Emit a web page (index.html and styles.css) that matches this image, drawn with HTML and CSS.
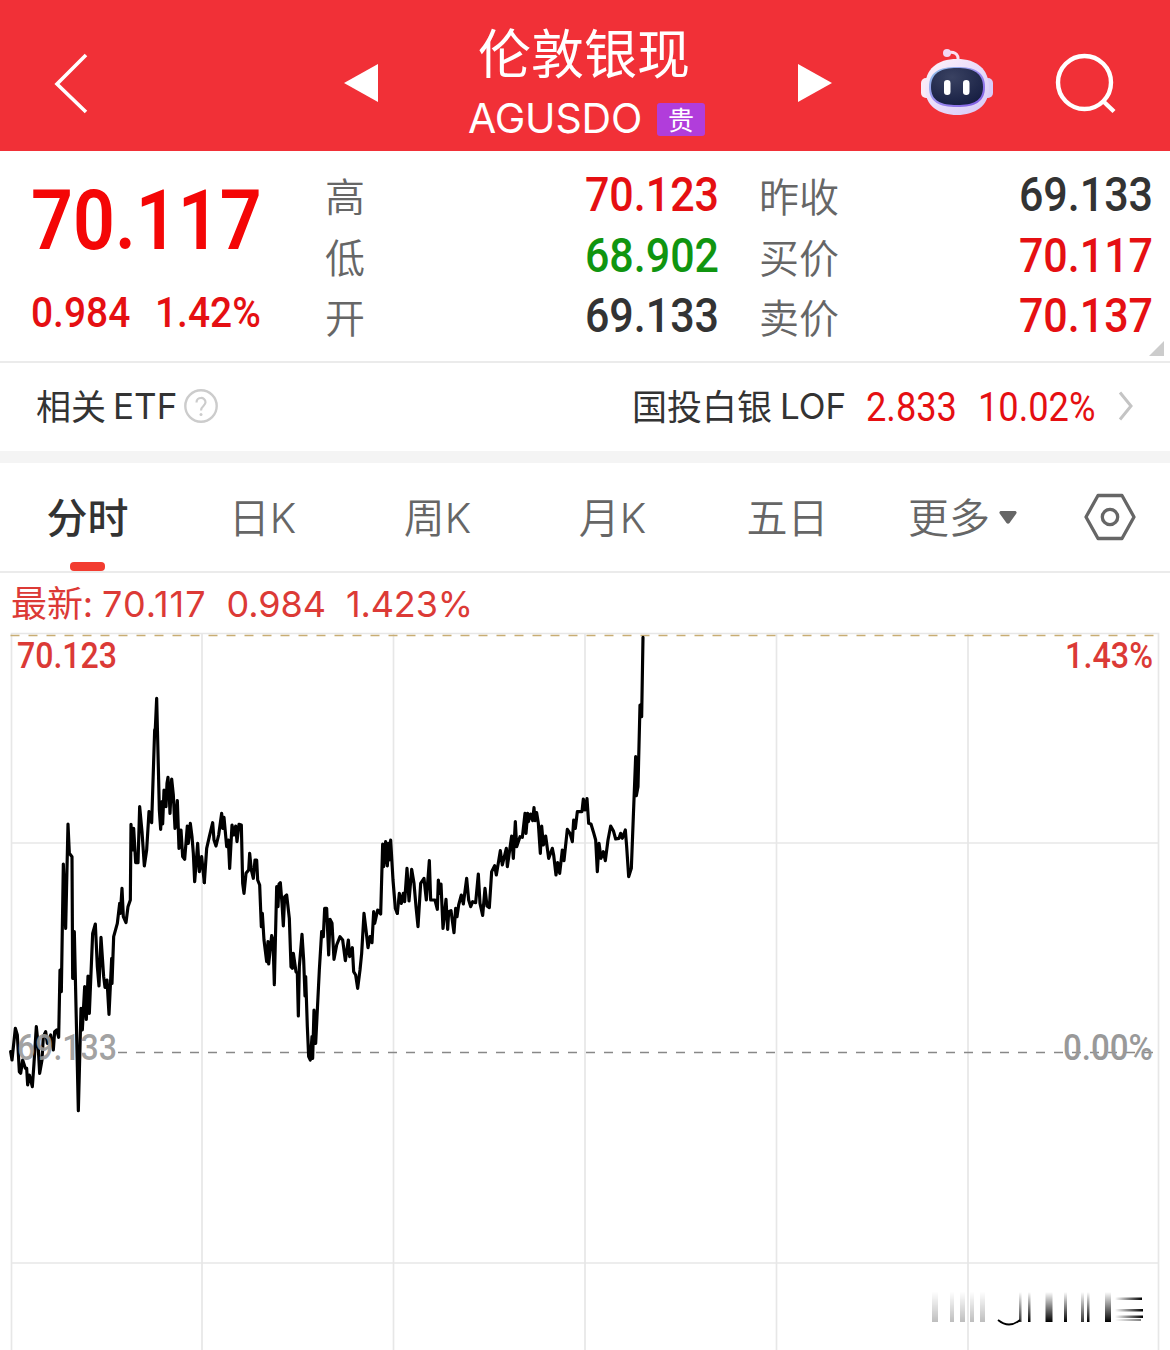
FILE: index.html
```html
<!DOCTYPE html>
<html lang="zh-CN">
<head>
<meta charset="utf-8">
<title>伦敦银现 AGUSDO</title>
<link rel="stylesheet" href="styles.css">
</head>
<body>
<header class="header">
  <svg class="back" width="40" height="66" viewBox="0 0 40 66"><path d="M34 4 5 33 34 61" fill="none" stroke="#fff" stroke-width="3.6"/></svg>
  <svg class="prev" width="34" height="40" viewBox="0 0 34 40"><path d="M0 20 34 1V39Z" fill="#fff"/></svg>
  <div class="heading">
    <h1 class="name">伦敦银现</h1>
    <div class="code-row"><span class="code">AGUSDO</span><span class="badge">贵</span></div>
  </div>
  <svg class="next" width="34" height="40" viewBox="0 0 34 40"><path d="M34 20 0 1V39Z" fill="#fff"/></svg>
  <svg class="robot" width="74" height="70" viewBox="920 48 74 70">
    <defs>
      <linearGradient id="shell" x1="0" y1="0" x2="1" y2="1"><stop offset="0" stop-color="#fff5f8"/><stop offset=".5" stop-color="#e9dcfb"/><stop offset="1" stop-color="#d5c9f5"/></linearGradient>
      <linearGradient id="rim" x1="0" y1="0" x2="1" y2="1"><stop offset="0" stop-color="#8fc7e8"/><stop offset=".5" stop-color="#9c8cf0"/><stop offset="1" stop-color="#7a55e0"/></linearGradient>
      <radialGradient id="face" cx=".4" cy=".25" r=".8"><stop offset="0" stop-color="#3a4262"/><stop offset="1" stop-color="#161e42"/></radialGradient>
    </defs>
    <path d="M947 53C953 51 959 53 958 61" fill="none" stroke="#fbdff0" stroke-width="3"/>
    <circle cx="947" cy="53" r="4" fill="#f3d6f4"/>
    <rect x="921" y="78" width="12" height="20" rx="5" fill="#faeaf6"/>
    <rect x="981" y="78" width="12" height="20" rx="5" fill="#d9ccf8"/>
    <path d="M957 59C977 59 989 69 989 88 989 106 975 115 957 115S925 106 925 88C925 69 937 59 957 59Z" fill="url(#shell)"/>
    <path d="M957 67C975 67 985 72 985 87S975 107 957 107 929 102 929 87 939 67 957 67Z" fill="url(#rim)"/>
    <path d="M957 68C973 68 983 73 983 87S973 105 957 105 931 101 931 87 941 68 957 68Z" fill="url(#face)"/>
    <rect x="944" y="80" width="6.5" height="15" rx="3.2" fill="#fff"/>
    <rect x="963" y="80" width="6.5" height="15" rx="3.2" fill="#fff"/>
  </svg>
  <svg class="search" width="62" height="62" viewBox="1055 53 62 62" fill="none" stroke="#fff" stroke-width="4.4"><circle cx="1084.5" cy="82.5" r="26.5"/><path d="M1103 101 1114 111.500"/></svg>
</header>

<section class="quote">
  <div class="last">
    <div class="price num">70.117</div>
    <div class="change"><span class="num">0.984</span><span class="num">1.42%</span></div>
  </div>
  <dl class="stats">
    <dt>高</dt><dd class="num up">70.123</dd><dt>昨收</dt><dd class="num">69.133</dd>
    <dt>低</dt><dd class="num down">68.902</dd><dt>买价</dt><dd class="num up">70.117</dd>
    <dt>开</dt><dd class="num">69.133</dd><dt>卖价</dt><dd class="num up">70.137</dd>
  </dl>
  <svg class="expand" width="15" height="15" viewBox="0 0 15 15"><path d="M15 0V15H0Z" fill="#ccc"/></svg>
</section>

<section class="etf">
  <span class="etf-label">相关</span><span class="etf-latin">ETF</span>
  <svg class="help" width="36" height="36" viewBox="0 0 36 36" fill="none" stroke="#ccc"><circle cx="18" cy="18" r="15.700" stroke-width="2.400"/><path d="M13.500 14.500C13.500 8.500 22.500 8.500 22.500 14.300 22.500 18 18 18 18 22.500" stroke-width="2.200"/><circle cx="18" cy="26.500" r="1.500" fill="#ccc" stroke="none"/></svg>
  <span class="fund">国投白银</span><span class="fund-latin">LOF</span>
  <span class="fund-price num">2.833</span><span class="fund-rate num">10.02%</span>
  <svg class="more" width="16" height="30" viewBox="0 0 16 30"><path d="M2 1.500 13 15 2 28.500" fill="none" stroke="#c4c4c4" stroke-width="3"/></svg>
</section>

<nav class="tabs">
  <span class="tab active">分时</span>
  <span class="tab">日<i>K</i></span>
  <span class="tab">周<i>K</i></span>
  <span class="tab">月<i>K</i></span>
  <span class="tab">五日</span>
  <span class="tab">更多<svg class="caret" width="18" height="13" viewBox="0 0 18 13"><path d="M1.500 0H16.500Q18.500 1 17 3L10.500 12Q9 13.500 7.500 12L1 3Q-.5 1 1.500 0Z" fill="#666"/></svg></span>
  <svg class="settings" width="52" height="48" viewBox="0 0 52 48" fill="none" stroke="#666" stroke-width="3.300"><path d="M14 2.500H38L50 24 38 45.500H14L2 24Z" stroke-linejoin="round"/><circle cx="26" cy="24" r="7.700"/></svg>
</nav>

<section class="latest"><span class="latest-label">最新:</span><span class="latest-price">70.117</span><span>0.984</span><span>1.423%</span></section>

<svg class="chart" width="1170" height="718" viewBox="0 632 1170 718">
  <defs>
    <linearGradient id="fade" x1="0" y1="0" x2="0" y2="1"><stop offset="0" stop-color="#000" stop-opacity="0"/><stop offset="1" stop-color="#000"/></linearGradient>
    <linearGradient id="streak" x1="0" y1="0" x2="1" y2="0"><stop offset="0" stop-color="#000" stop-opacity="0"/><stop offset="1" stop-color="#000"/></linearGradient>
  </defs>
  <g fill="none" stroke="#e7e7e7" stroke-width="1.700">
    <path d="M11.500 1350V633.500H1158.500V1350M202 634V1350M393.500 634V1350M585 634V1350M776.500 634V1350M968 634V1350M12 843H1158M12 1263H1158"/>
  </g>
  <path d="M10.500 635.500H1154" stroke="#c8ad73" stroke-width="1.400" stroke-dasharray="9 9"/>
  <path d="M118 1052.500H1154" stroke="#888" stroke-width="1.700" stroke-dasharray="9 9"/>
  <g class="line" fill="none" stroke="#000" stroke-width="9.500" stroke-linejoin="round" stroke-linecap="round">
    <polyline transform="translate(0 680) scale(.33333)" points="32,1115 36,1140 46,1045 52,1065 58,1175 62,1180 68,1140 76,1165 80,1165 83,1215 88,1185 97,1220 102,1150 109,1040 114,1090 119,1180 126,1140 130,1070 137,1055 142,1090 152,1065 160,1110 164,1055 170,1050 176,1072 180,870 184,935 190,552 197,745 204,432 208,520 216,530 218,895 223,755 235,1292 243,985 247,1050 254,920 259,1018 264,888 268,1000 278,760 286,732 292,860 297,918 303,772 311,890 315,922 321,900 327,1003 335,835 336,910 341,770 352,730 359,670 361,700 366,625 370,710 378,728 384,680 391,660 393,433 398,510 401,445 407,548 414,548 419,380 426,455 433,558 440,510 447,395 455,428 464,150 466,145 470,55 475,260 478,390 482,448 486,365 488,432 492,330 498,380 501,310 504,292 508,350 510,400 515,297 520,345 525,445 532,362 537,505 543,450 548,530 554,538 562,438 565,490 571,430 576,470 580,520 584,605 593,490 598,575 605,530 609,570 613,608"/>
    <polyline transform="translate(200 780) scale(.33333)" points="13,308 20,205 28,170 38,128 42,180 48,198 56,165 65,100 68,145 72,112 80,200 85,180 89,265 96,135 102,165 107,138 111,185 117,133 124,135 128,310 132,340 138,280 146,270 149,220 154,270 160,295 165,240 170,240 173,300 179,315 184,440 187,400 192,480 200,545 204,485 206,552 215,467 219,480 223,614 230,320 234,380 237,312 241,308 246,370 250,438 254,350 260,345 268,415 273,560 277,565 280,520 288,575 292,580 295,708 298,560 306,463 311,540 315,648 317,590 322,740 326,830 331,840 336,770 338,835 342,690 347,790 352,690 358,570 365,455 370,470 374,385 380,385 386,525 390,418 396,430 402,538 410,495 420,470 428,480 436,542 445,480 449,530 457,503 461,575 467,585 473,625 480,570 485,520 492,400 498,450 504,503 510,470 516,488 521,395 524,430 533,390 542,402 548,192 551,260 557,185 562,258 566,190 568,240 572,180 579,300 586,385 592,400"/>
    <polyline transform="translate(370 620) scale(.33333)" points="82,880 88,820 94,850 100,820 104,845 111,745 117,843 125,748 132,790 138,860 144,920 152,790 162,775 169,840 178,722 182,840 195,840 202,868 205,780 209,820 213,792 219,925 228,838 233,928 236,875 243,872 252,938 257,865 261,890 266,855 274,825 280,852 290,775 296,840 302,860 308,845 317,848 325,762 330,850 338,886 345,805 351,858 358,863 365,755 374,737 379,765 391,692 397,735 409,685 412,740 425,648 430,715 436,605 440,680 450,650 457,652 465,580 468,640 473,580 475,605 482,582 488,602 492,563 495,602 500,578 505,610 511,700 515,618 520,675 527,648 536,715 547,685 551,705 558,765 563,728 569,760 577,690 582,722 592,628 600,640 607,665 611,600 616,625 622,575 636,575 640,537 645,570 651,536 656,610 663,612 670,635 677,660 682,755 687,670 693,715 700,695 706,722 714,660 722,618 730,632 737,657 747,655 752,640 757,655 766,630 770,680 776,770 784,745 790,590 797,410 799,527 804,500 810,255 815,290 819,52"/>
  </g>
  <g class="axis">
    <text x="17" y="668" textLength="100" lengthAdjust="spacingAndGlyphs" fill="#db3a36">70.123</text>
    <text x="1065" y="668" textLength="88" lengthAdjust="spacingAndGlyphs" fill="#db3a36">1.43%</text>
    <text x="17" y="1060" textLength="100" lengthAdjust="spacingAndGlyphs" fill="#999" fill-opacity=".92">69.133</text>
    <text x="1063" y="1060" textLength="90" lengthAdjust="spacingAndGlyphs" fill="#999">0.00%</text>
  </g>
  <g fill="url(#fade)">
    <g opacity=".25"><rect x="932" y="1292" width="6" height="30"/><rect x="950" y="1292" width="4" height="30"/><rect x="960" y="1292" width="5" height="30"/><rect x="970" y="1292" width="4" height="30"/><rect x="980" y="1292" width="5" height="30"/></g>
    <rect x="1019" y="1292" width="2.500" height="30" opacity=".8"/><rect x="1028" y="1292" width="2.500" height="30"/>
    <rect x="1045.500" y="1292" width="7" height="30"/><rect x="1064" y="1292" width="3" height="30"/><rect x="1081" y="1292" width="3" height="30" opacity=".8"/><rect x="1087" y="1292" width="2.500" height="30"/><rect x="1105" y="1292" width="6" height="30"/>
  </g>
  <g fill="url(#streak)"><rect x="1115" y="1297.500" width="27" height="2.500"/><rect x="1115" y="1309" width="28" height="2.500"/><rect x="1115" y="1315.500" width="28" height="2.500"/><rect x="1115" y="1319" width="26" height="2" opacity=".5"/></g>
  <path d="M998 1320Q1009 1329 1020 1320" fill="none" stroke="#000" stroke-width="1.800"/>
</svg>
</body>
</html>
```
FILE: styles.css
```css
* { box-sizing: border-box; margin: 0; padding: 0; }
body {
  width: 1170px; height: 1350px; overflow: hidden; background: #fff; color: #333;
  font-family: Inter, "Noto Sans CJK SC", sans-serif; display: flex; flex-direction: column;
}
svg { display: block; flex: none; }
span, dt, dd { white-space: nowrap; }
.num { font-family: Roboto, sans-serif; font-weight: 500; transform: scaleX(.905); transform-origin: left center; }

.header { height: 151px; flex: none; background: #f13037; color: #fff; display: flex; }
.back { margin: 51px 0 0 52px; }
.prev { margin: 63px 0 0 252px; }
.heading { width: 340px; margin-left: 66px; padding: 22px 0 0 34px; }
.name { font: 400 53px/58px "Noto Sans CJK SC", sans-serif; }
.code-row { display: flex; align-items: center; height: 50px; margin: 13px 0 0 -10px; }
.code { font-size: 41px; font-weight: 370; line-height: 50px; letter-spacing: -.2px; width: 189px; }
.badge { width: 48px; height: 33px; border-radius: 3px; background: #b13ddb; font: 26px/31px "Noto Sans CJK SC", sans-serif; text-align: center; margin-top: 2px; }
.next { margin: 63px 0 0 14px; }
.robot { margin: 48px 0 0 88px; }
.search { margin: 53px 0 0 61px; }

.quote { position: relative; height: 212px; flex: none; display: flex; border-bottom: 2px solid #ebebeb; }
.last { width: 325px; padding: 20px 0 0 31px; color: #f40606; }
.price { font-size: 83px; line-height: 100px; font-weight: 600; transform: scaleX(.885); }
.change { display: grid; grid-template-columns: 124px 110px; font-size: 43px; line-height: 50px; padding-top: 16px; color: #e50f12; }
.stats { display: grid; grid-template-columns: 194px 200px 60px 374px; grid-auto-rows: 60.500px; padding-top: 14px; line-height: 60px; }
.stats dt { font-size: 40px; color: #666; font-family: "Noto Sans CJK SC", sans-serif; font-weight: 350; }
.stats dt:nth-of-type(even) { padding-left: 40px; }
.stats dd { font-size: 47.500px; text-align: right; transform-origin: right center; }
.up { color: #e50f12; }
.down { color: #109510; }
.expand { position: absolute; right: 6px; bottom: 5px; }

.etf { height: 100px; flex: none; display: flex; align-items: center; padding-left: 36px; border-bottom: 12px solid #f4f4f4; font-size: 35px; }
.etf-label { width: 77px; margin-top: -5px; }
.etf-latin { width: 70px; }
.help { margin: -2px 413px 0 0; }
.fund { width: 148px; margin-top: -5px; }
.fund-latin { width: 86px; }
.etf-latin, .fund-latin, .more { margin-top: -2px; }
.etf .num { font-size: 40px; font-weight: 400; color: #e50f12; }
.fund-price { width: 112px; }
.fund-rate { width: 140px; }

.tabs { height: 110px; flex: none; display: flex; border-bottom: 2px solid #ebebeb; font-size: 41px; line-height: 111px; color: #666; font-weight: 350; }
.tab { position: relative; width: 175px; height: 108px; text-align: center; }
.tab i { font-style: normal; }
.tab.active { color: #333; font-weight: 500; }
.tab.active::after { content: ""; position: absolute; left: 70px; bottom: 0; width: 35px; height: 9px; border-radius: 4px; background: #f23c30; }
.caret { display: inline-block; vertical-align: 9px; margin-left: 9px; }
.settings { margin: 30px 0 0 34px; }

.latest { height: 59px; flex: none; display: flex; line-height: 62px; padding-left: 11px; font-size: 36px; font-weight: 370; color: #dc3a36; letter-spacing: -.100px; gap: 20px; }
.latest-label { margin-right: -11px; }
.latest-price { letter-spacing: 1px; }
.chart { width: 1170px; height: 718px; }
.axis { font: 500 36px Roboto, sans-serif; }
```
